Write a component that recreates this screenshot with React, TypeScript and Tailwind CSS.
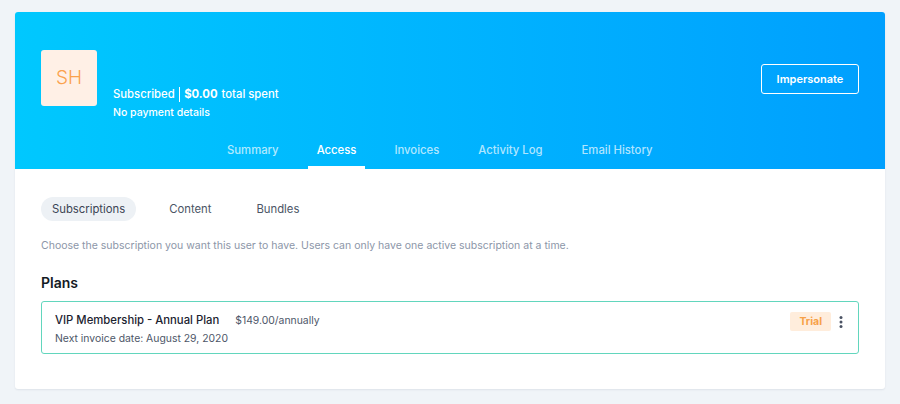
import React from "react";

const tabs = ["Summary", "Access", "Invoices", "Activity Log", "Email History"];
const subTabs = ["Subscriptions", "Content", "Bundles"];

export default function App() {
  return (
    <div className="min-h-[404px] w-full bg-[#f0f4f8] px-[15px] pt-[12px] font-['Inter',sans-serif]">
      <div className="overflow-hidden rounded-[3px] bg-white shadow-[0_1px_2px_rgba(15,30,60,0.08)]">
        {/* header */}
        <div className="bg-linear-to-r from-[#00c8fe] to-[#009ffe] px-[26px] pt-[38px]">
          <div className="flex h-[56px] items-start">
            <div className="flex h-[56px] w-[56px] shrink-0 items-center justify-center rounded-[3px] bg-[#fff0e6] text-[19px] font-light text-[#fba24c]">
              SH
            </div>
            <div className="ml-[16px] pt-[35px] text-white">
              <div className="flex h-[18px] items-center text-[11.3px] font-medium">
                Subscribed
                <span className="mx-[4px] h-[15px] w-[1.5px] bg-white" />
                <span className="font-bold">$0.00</span>
                <span className="ml-[4px]">total spent</span>
              </div>
              <div className="mt-[2px] h-[16px] text-[10.5px] font-medium leading-[16px]">No payment details</div>
            </div>
            <button className="ml-auto mt-[14px] h-[30px] w-[98px] rounded-[3px] border-[1.5px] border-white text-[11px] font-semibold text-white">
              Impersonate
            </button>
          </div>
          <div className="ml-[176px] mt-[25px] flex gap-[19px]">
            {tabs.map((t) => (
              <div
                key={t}
                className={
                  t === "Access"
                    ? "flex h-[38px] items-center border-b-[3px] border-white px-[9px] pt-[3px] text-[11.3px] font-medium text-white"
                    : "flex h-[38px] items-center px-[10px] text-[11.3px] font-medium text-white/70"
                }
              >
                {t}
              </div>
            ))}
          </div>
        </div>
        {/* body */}
        <div className="px-[26px] pb-[35px] pt-[28px]">
          <div className="flex gap-[21px]">
            {subTabs.map((t) => (
              <div
                key={t}
                className={
                  t === "Subscriptions"
                    ? "flex h-[24px] items-center rounded-full bg-[#edf1f5] px-[11px] text-[11.3px] text-[#3b4454]"
                    : "flex h-[24px] items-center px-[12px] text-[11.3px] text-[#4b5565]"
                }
              >
                {t}
              </div>
            ))}
          </div>
          <p className="mt-[17px] text-[10.5px] leading-[16px] text-[#8c96a8]">
            Choose the subscription you want this user to have. Users can only have one active subscription at a time.
          </p>
          <h3 className="mt-[19px] text-[14px] font-semibold leading-[20px] text-[#141a24]">Plans</h3>
          <div className="mt-[8px] flex h-[53px] items-start rounded-[3px] border-[1.5px] border-[#62d6bd] pl-[13px] pr-[14px] pt-[10px]">
            <div>
              <div className="flex items-baseline">
                <span className="text-[11.3px] font-medium text-[#1c2330]">VIP Membership - Annual Plan</span>
                <span className="ml-[16px] text-[10.4px] text-[#4d5668]">$149.00/annually</span>
              </div>
              <div className="mt-[2px] text-[10.4px] text-[#4d5668]">Next invoice date: August 29, 2020</div>
            </div>
            <div className="ml-auto flex items-center gap-[7px]">
              <span className="flex h-[19px] items-center rounded-[2px] bg-[#ffeddc] px-[9px] text-[10.5px] font-bold text-[#f7a046]">
                Trial
              </span>
              <svg width="6" height="16" viewBox="0 0 6 16">
                <circle cx="3" cy="3.5" r="1.5" fill="#4a5263" />
                <circle cx="3" cy="8" r="1.5" fill="#4a5263" />
                <circle cx="3" cy="12.5" r="1.5" fill="#4a5263" />
              </svg>
            </div>
          </div>
        </div>
      </div>
    </div>
  );
}
